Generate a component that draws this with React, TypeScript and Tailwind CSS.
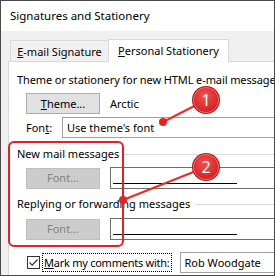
import React from "react";

const FONT = { fontFamily: '"Noto Sans", "Open Sans", sans-serif' };

function WinButton({
    children,
    disabled,
}: {
    children: React.ReactNode;
    disabled?: boolean;
}) {
    return (
        <div
            className={`w-[74px] h-[21px] flex items-center justify-center border ${
                disabled
                    ? "bg-[#cccccc] border-[#bfbfbf] text-[#838383]"
                    : "bg-[#e1e1e1] border-[#adadad] text-black"
            }`}
        >
            {children}
        </div>
    );
}

function GroupLabel({ text }: { text: string }) {
    return (
        <div className="flex items-center h-[16px] pl-[8px]">
            <span className="whitespace-nowrap">{text}</span>
            <div className="flex-1 h-px bg-[#dcdcdc] ml-[5px]" />
        </div>
    );
}

function FontRow() {
    return (
        <div className="flex items-center pl-[17px] h-[22px]">
            <WinButton disabled>Font...</WinButton>
            <div className="ml-[10px] flex-1 h-[22px] border border-r-0 border-[#6e6e6e] flex items-end pb-[4px] pl-[2px]">
                <div className="w-[124px] h-px bg-black" />
            </div>
        </div>
    );
}

function Badge({ cx, cy, n }: { cx: number; cy: number; n: string }) {
    return (
        <g>
            <circle cx={cx} cy={cy} r={14} fill="#b81818" />
            <circle
                cx={cx}
                cy={cy}
                r={12.6}
                fill="url(#badgeGrad)"
                stroke="#ff9a9a"
                strokeOpacity={0.6}
                strokeWidth={1}
            />
            <text
                x={cx}
                y={cy + 5.5}
                textAnchor="middle"
                fill="#fff"
                fontSize={16}
                style={FONT}
            >
                {n}
            </text>
        </g>
    );
}

export default function App() {
    return (
        <div
            className="relative w-[275px] h-[276px] border border-[#4a4a4a] overflow-hidden flex flex-col text-[11px] leading-[16px] text-black"
            style={FONT}
        >
            {/* Title bar */}
            <div className="h-[30px] bg-white flex items-center pl-[9px] shrink-0 text-[11.5px]">
                Signatures and Stationery
            </div>

            {/* Body */}
            <div className="flex-1 bg-[#f0f0f0] flex flex-col pl-[7px] pt-[7px]">
                {/* Tabs */}
                <div className="flex items-end pl-[2px] h-[23px] shrink-0">
                    <div className="h-[21px] w-[99px] border border-b-0 border-[#d9d9d9] bg-[#f0f0f0] flex items-center justify-center pt-[1px]">
                        <span>
                            <span className="underline">E</span>-mail Signature
                        </span>
                    </div>
                    <div className="h-[23px] w-[121px] -ml-px border border-b-0 border-[#d9d9d9] bg-white flex items-center justify-center relative z-10 -mb-px">
                        <span>
                            <span className="underline">P</span>ersonal Stationery
                        </span>
                    </div>
                </div>

                {/* Panel */}
                <div className="flex-1 bg-white border-l border-t border-[#d9d9d9] flex flex-col">
                    <div className="mt-[10px] pl-[8px] h-[16px] whitespace-nowrap tracking-[-0.1px]">
                        Theme or stationery for new HTML e-mail message
                    </div>

                    <div className="flex items-center pl-[17px] mt-[5px] h-[21px]">
                        <WinButton>
                            <span>
                                <span className="underline">T</span>heme...
                            </span>
                        </WinButton>
                        <span className="ml-[10px]">Arctic</span>
                    </div>

                    <div className="flex items-center pl-[17px] mt-[3px] h-[21px]">
                        <span className="w-[36px]">
                            Fon<span className="underline">t</span>:
                        </span>
                        <div className="flex-1 h-[21px] border border-r-0 border-[#a0a0a0] flex items-center pl-[4px] whitespace-nowrap">
                            Use theme's font
                        </div>
                    </div>

                    <div className="mt-[8px]">
                        <GroupLabel text="New mail messages" />
                    </div>
                    <div className="mt-[5px]">
                        <FontRow />
                    </div>

                    <div className="mt-[7px]">
                        <GroupLabel text="Replying or forwarding messages" />
                    </div>
                    <div className="mt-[6px]">
                        <FontRow />
                    </div>

                    <div className="flex items-center pl-[18px] mt-[12px] h-[21px]">
                        <div className="w-[13px] h-[13px] border border-[#333] bg-white flex items-center justify-center">
                            <svg width="11" height="11" viewBox="0 0 11 11">
                                <path
                                    d="M1.5 5.5 L4.2 8.2 L9.5 2.5"
                                    fill="none"
                                    stroke="#333"
                                    strokeWidth="1.2"
                                />
                            </svg>
                        </div>
                        <div className="ml-[2px] border border-dotted border-black px-[1px] h-[19px] flex items-center whitespace-nowrap tracking-[-0.25px]">
                            <span className="underline">M</span>ark my comments with:
                        </div>
                        <div className="ml-[8px] flex-1 h-[21px] border border-r-0 border-[#a0a0a0] flex items-center pl-[4px] whitespace-nowrap">
                            Rob Woodgate
                        </div>
                    </div>
                </div>
            </div>

            {/* Annotations */}
            <svg
                className="absolute left-[-1px] top-[-1px] pointer-events-none"
                width="275"
                height="276"
                viewBox="0 0 275 276"
            >
                <defs>
                    <radialGradient id="badgeGrad" cx="45%" cy="35%" r="70%">
                        <stop offset="0%" stopColor="#f25050" />
                        <stop offset="100%" stopColor="#d21c1c" />
                    </radialGradient>
                </defs>
                <rect
                    x={9}
                    y={142}
                    width={114}
                    height={104}
                    rx={5}
                    fill="none"
                    stroke="#ec1c24"
                    strokeWidth={2}
                />
                <line x1={206} y1={100} x2={163} y2={122} stroke="#ee2a2a" strokeWidth={2} />
                <circle cx={163} cy={122} r={4} fill="#e82020" />
                <line x1={206} y1={167} x2={123} y2={200} stroke="#ee2a2a" strokeWidth={2} />
                <circle cx={123} cy={200} r={4} fill="#e82020" />
                <Badge cx={206} cy={100} n="1" />
                <Badge cx={206} cy={167} n="2" />
            </svg>
        </div>
    );
}
